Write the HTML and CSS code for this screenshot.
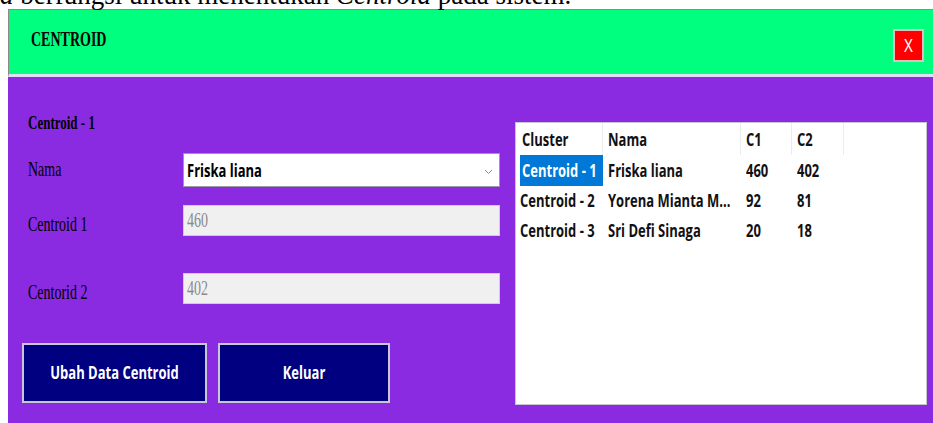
FILE: index.html
```html
<!DOCTYPE html>
<html lang="id">
<head>
<meta charset="utf-8">
<title>Centroid</title>
<link rel="stylesheet" href="styles.css">
</head>
<body>
  <p class="caption"><em>a</em> berfungsi untuk menentukan <em>Centroid</em> pada sistem.</p>

  <div class="window">
    <header class="titlebar">
      <span class="title tall-serif">CENTROID</span>
      <button class="close"><span class="tall">X</span></button>
    </header>

    <main class="content">
      <section class="form-side">
        <h2 class="section-title"><span class="tall-serif">Centroid - 1</span></h2>

        <div class="form-row row-nama">
          <label class="label"><span class="tall-serif">Nama</span></label>
          <div class="select">
            <span class="select-value tall">Friska liana</span>
            <svg class="chevron" width="9" height="6" viewBox="0 0 9 6"><path d="M1 1 L4.5 4.5 L8 1" fill="none" stroke="#8a8a8a" stroke-width="1"/></svg>
          </div>
        </div>

        <div class="form-row row-c1">
          <label class="label label-low"><span class="tall-serif">Centroid 1</span></label>
          <div class="field"><span class="tall-serif">460</span></div>
        </div>

        <div class="form-row row-c2">
          <label class="label label-low"><span class="tall-serif">Centorid 2</span></label>
          <div class="field"><span class="tall-serif">402</span></div>
        </div>

        <div class="actions">
          <button class="btn btn-wide"><span class="tall">Ubah Data Centroid</span></button>
          <button class="btn btn-narrow"><span class="tall">Keluar</span></button>
        </div>
      </section>

      <section class="list">
        <div class="list-row list-head">
          <div class="cell c-cluster"><span class="tall">Cluster</span></div>
          <div class="cell c-nama"><span class="tall">Nama</span></div>
          <div class="cell c-c1"><span class="tall">C1</span></div>
          <div class="cell c-c2"><span class="tall">C2</span></div>
        </div>
        <div class="list-row">
          <div class="cell c-cluster"><span class="selected"><span class="tall">Centroid - 1</span></span></div>
          <div class="cell c-nama"><span class="tall">Friska liana</span></div>
          <div class="cell c-c1"><span class="tall">460</span></div>
          <div class="cell c-c2"><span class="tall">402</span></div>
        </div>
        <div class="list-row">
          <div class="cell c-cluster"><span class="tall">Centroid - 2</span></div>
          <div class="cell c-nama"><span class="tall">Yorena Mianta M...</span></div>
          <div class="cell c-c1"><span class="tall">92</span></div>
          <div class="cell c-c2"><span class="tall">81</span></div>
        </div>
        <div class="list-row">
          <div class="cell c-cluster"><span class="tall">Centroid - 3</span></div>
          <div class="cell c-nama"><span class="tall">Sri Defi Sinaga</span></div>
          <div class="cell c-c1"><span class="tall">20</span></div>
          <div class="cell c-c2"><span class="tall">18</span></div>
        </div>
      </section>
    </main>
  </div>
</body>
</html>
```

FILE: styles.css
```css
* {
  box-sizing: border-box;
}

html, body {
  margin: 0;
  padding: 0;
  background: #ffffff;
  overflow: hidden;
  width: 933px;
  height: 423px;
}

/* the form is drawn slightly stretched in height */
.tall {
  display: inline-block;
  transform: scaleY(1.3);
}

.tall-serif {
  display: inline-block;
  transform: scaleY(1.45);
}

/* document line above the form, mostly scrolled off */
.caption {
  margin: -18px 0 0 0;
  height: 27px;
  font-family: "Liberation Serif", serif;
  font-size: 27px;
  line-height: 27px;
  color: #000;
  white-space: nowrap;
}

.window {
  margin-left: 8px;
  width: 925px;
}

.titlebar {
  height: 68px;
  background: #00ff7f;
  border-top: 1px solid #8a8a8a;
  border-left: 1px solid #8a8a8a;
  border-bottom: 3px solid #e4dcf6;
  display: flex;
  align-items: center;
  justify-content: space-between;
  padding: 0 9px 0 22px;
}

.title {
  font-family: "Liberation Serif", serif;
  font-weight: bold;
  font-size: 14px;
  color: #000;
  margin-top: -4px;
}

.close {
  width: 31px;
  height: 33px;
  margin-top: 7px;
  background: #ff0000;
  border: 2px solid #e6bcbc;
  color: #fff;
  font-family: "Liberation Sans", sans-serif;
  font-size: 14px;
  padding: 0;
  display: flex;
  align-items: center;
  justify-content: center;
}

.content {
  height: 346px;
  background: #8a2be2;
  display: flex;
  align-items: flex-start;
}

.form-side {
  width: 507px;
  padding-left: 14px;
  display: flex;
  flex-direction: column;
}

.section-title {
  margin: 36px 0 0 6px;
  height: 20px;
  line-height: 20px;
  font-family: "Liberation Serif", serif;
  font-weight: bold;
  font-size: 13px;
  color: #000;
}

.form-row {
  display: flex;
}

.row-nama {
  margin-top: 20px;
  height: 34px;
}

.row-c1 {
  margin-top: 18px;
  height: 31px;
}

.row-c2 {
  margin-top: 37px;
  height: 31px;
}

.label {
  width: 161px;
  padding-left: 6px;
  font-family: "Liberation Serif", serif;
  font-size: 14px;
  color: #000;
  display: flex;
  align-items: center;
}

.label-low {
  padding-top: 9px;
}

.select {
  width: 317px;
  background: #ffffff;
  border: 1px solid #9c9aa4;
  display: flex;
  align-items: center;
  justify-content: space-between;
  padding: 0 6px 0 3px;
}

.select-value {
  font-family: "Open Sans", sans-serif;
  font-weight: bold;
  font-size: 13px;
  color: #000;
}

.chevron {
  margin-top: 3px;
}

.field {
  width: 317px;
  background: #f0f0f0;
  border: 1px solid #cfcad6;
  display: flex;
  align-items: center;
  padding-left: 3px;
  font-family: "Liberation Serif", serif;
  font-size: 14px;
  color: #8a8a8a;
}

.actions {
  display: flex;
  gap: 11px;
  margin-top: 39px;
}

.btn {
  height: 60px;
  background: #000080;
  border: 2px solid #c8c8d4;
  color: #ffffff;
  font-family: "Open Sans", sans-serif;
  font-weight: bold;
  font-size: 13px;
  padding: 0;
}

.btn-wide {
  width: 185px;
}

.btn-narrow {
  width: 172px;
}

/* list view on the right */
.list {
  margin-top: 45px;
  width: 412px;
  height: 283px;
  background: #ffffff;
  border: 1px solid #c8c4d0;
  font-family: "Open Sans", sans-serif;
  font-weight: bold;
  font-size: 13px;
  color: #111;
}

.list-row {
  display: flex;
  height: 30px;
  align-items: center;
}

.list-head {
  height: 32px;
}

.cell {
  height: 100%;
  display: flex;
  align-items: center;
  padding-left: 5px;
  white-space: nowrap;
}

.list-head .cell {
  border-right: 1px solid #ececec;
}

.c-cluster { width: 87px; }
.c-nama { width: 138px; }
.c-c1 { width: 51px; }
.c-c2 { width: 52px; }

.list-row .c-cluster {
  padding-left: 4px;
}

.list-head .c-cluster {
  padding-left: 6px;
}

.selected {
  display: flex;
  align-items: center;
  width: 83px;
  height: 31px;
  padding-left: 2px;
  background: #0078d7;
  color: #ffffff;
}
```
